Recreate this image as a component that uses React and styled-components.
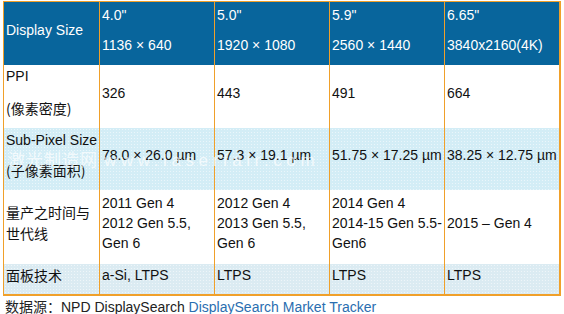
import React from "react";
import styled, { createGlobalStyle } from "styled-components";

const GlobalStyle = createGlobalStyle`
  html, body {
    margin: 0;
    padding: 0;
    background: #ffffff;
  }
  body {
    font-family: "Liberation Sans", Arial, "Noto Sans CJK SC", sans-serif;
    font-size: 14px;
    color: #111111;
  }
`;

const Page = styled.div`
  position: relative;
  width: 564px;
  padding: 1px 0 0 3px;
  box-sizing: border-box;
`;

const Table = styled.table`
  border-collapse: separate;
  border-spacing: 0;
  table-layout: fixed;
  border-top: 1px solid #f0a02a;
  border-left: 1px solid #f0a02a;
  border-right: 2px solid #f0a02a;
  border-bottom: 2px solid #f0a02a;
`;

const rowBg = {
  head: "#08659c",
  white: "#ffffff",
  blue: "#d3edf6",
  grey: "#dbebf2",
};

const Row = styled.tr`
  height: ${(p) => p.$h}px;
  background-color: ${(p) => rowBg[p.$tone]};
  background-image: ${(p) =>
    p.$tone === "blue" || p.$tone === "grey"
      ? "radial-gradient(rgba(255,255,255,0.55) 0.6px, transparent 0.9px)"
      : "none"};
  background-size: 3px 3px;
  color: ${(p) => (p.$tone === "head" ? "#ffffff" : "#111111")};
`;

const Cell = styled.td`
  box-sizing: border-box;
  width: ${(p) => p.$w}px;
  padding: 0 2px 8px 2px;
  border-left: ${(p) => (p.$first ? "none" : "1px solid #f0a02a")};
  vertical-align: middle;
  line-height: 20px;
  white-space: nowrap;
`;

const Stack = styled.div`
  display: flex;
  flex-direction: column;
  gap: ${(p) => p.$gap}px;
`;

const Cjk = styled.span`
  font-family: "Noto Sans CJK SC", "Liberation Sans", sans-serif;
  font-size: 14px;
`;

const Watermark = styled.div`
  position: absolute;
  left: 8px;
  top: 146px;
  display: flex;
  align-items: baseline;
  gap: 6px;
  color: rgba(255, 255, 255, 0.7);
  font-size: 17px;
  pointer-events: none;
  white-space: nowrap;
`;

const WaterCjk = styled.span`
  font-family: "Noto Sans CJK SC", sans-serif;
  letter-spacing: 1px;
`;

const WaterUrl = styled.span`
  font-family: "Liberation Sans", sans-serif;
  letter-spacing: 4.6px;
`;

const Footer = styled.div`
  margin-top: 2px;
  padding-left: 2px;
  line-height: 16px;
  white-space: nowrap;
  color: #222222;
`;

const Link = styled.span`
  color: #2a6eb0;
`;

const widths = [95, 115, 115, 115, 114];

function Multi({ lines, gap = 0 }) {
  return (
    <Stack $gap={gap}>
      {lines.map((l, i) => (
        <span key={i}>{l}</span>
      ))}
    </Stack>
  );
}

export default function App() {
  return (
    <Page>
      <GlobalStyle />
      <Table>
        <tbody>
          <Row $h={63} $tone="head">
            <Cell $w={widths[0]} $first>Display Size</Cell>
            <Cell $w={widths[1]}><Multi gap={10} lines={["4.0\"", "1136 × 640"]} /></Cell>
            <Cell $w={widths[2]}><Multi gap={10} lines={["5.0\"", "1920 × 1080"]} /></Cell>
            <Cell $w={widths[3]}><Multi gap={10} lines={["5.9\"", "2560 × 1440"]} /></Cell>
            <Cell $w={widths[4]}><Multi gap={10} lines={["6.65\"", "3840x2160(4K)"]} /></Cell>
          </Row>
          <Row $h={63} $tone="white">
            <Cell $w={widths[0]} $first>
              <Multi gap={12} lines={["PPI", <Cjk>(像素密度)</Cjk>]} />
            </Cell>
            <Cell $w={widths[1]}>326</Cell>
            <Cell $w={widths[2]}>443</Cell>
            <Cell $w={widths[3]}>491</Cell>
            <Cell $w={widths[4]}>664</Cell>
          </Row>
          <Row $h={62} $tone="blue">
            <Cell $w={widths[0]} $first>
              <Multi gap={10} lines={["Sub-Pixel Size", <Cjk>(子像素面积)</Cjk>]} />
            </Cell>
            <Cell $w={widths[1]}>78.0 × 26.0 µm</Cell>
            <Cell $w={widths[2]}>57.3 × 19.1 µm</Cell>
            <Cell $w={widths[3]}>51.75 × 17.25 µm</Cell>
            <Cell $w={widths[4]}>38.25 × 12.75 µm</Cell>
          </Row>
          <Row $h={74} $tone="white">
            <Cell $w={widths[0]} $first>
              <Multi lines={[<Cjk>量产之时间与</Cjk>, <Cjk>世代线</Cjk>]} />
            </Cell>
            <Cell $w={widths[1]}><Multi lines={["2011 Gen 4", "2012 Gen 5.5,", "Gen 6"]} /></Cell>
            <Cell $w={widths[2]}><Multi lines={["2012 Gen 4", "2013 Gen 5.5,", "Gen 6"]} /></Cell>
            <Cell $w={widths[3]}><Multi lines={["2014 Gen 4", "2014-15 Gen 5.5-", "Gen6"]} /></Cell>
            <Cell $w={widths[4]}>2015 – Gen 4</Cell>
          </Row>
          <Row $h={30} $tone="grey">
            <Cell $w={widths[0]} $first><Cjk>面板技术</Cjk></Cell>
            <Cell $w={widths[1]}>a-Si, LTPS</Cell>
            <Cell $w={widths[2]}>LTPS</Cell>
            <Cell $w={widths[3]}>LTPS</Cell>
            <Cell $w={widths[4]}>LTPS</Cell>
          </Row>
        </tbody>
      </Table>
      <Footer>
        <Cjk>数据源：</Cjk>NPD DisplaySearch <Link>DisplaySearch Market Tracker</Link>
      </Footer>
      <Watermark>
        <WaterCjk>激光制造网</WaterCjk>
        <WaterUrl>www.laserfair.com</WaterUrl>
      </Watermark>
    </Page>
  );
}
